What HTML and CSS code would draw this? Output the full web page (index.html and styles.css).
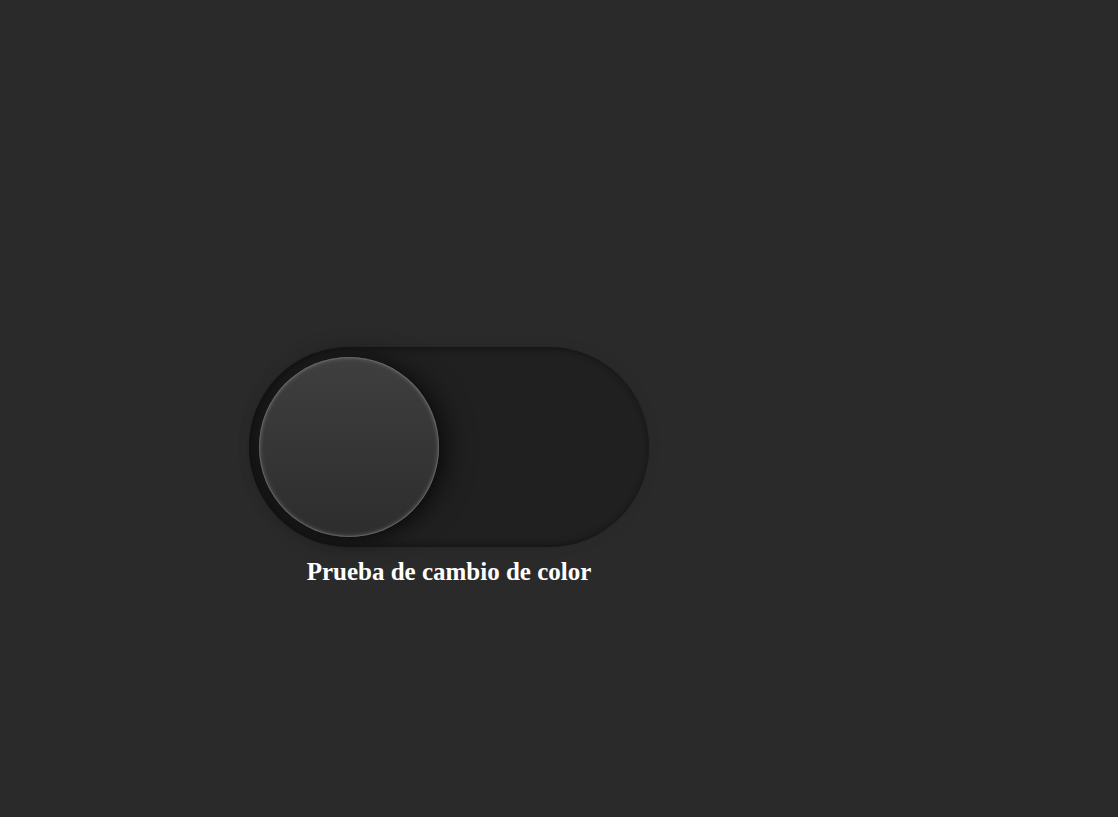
FILE: index.html
```html
<!DOCTYPE html>
<html lang="es">
<head>
<meta charset="utf-8">
<title>Toggle</title>
<link rel="stylesheet" href="styles.css">
</head>
<body>
<div class="wrap">
  <label class="toggle">
    <span class="knob"></span>
  </label>
  <h3 class="label">Prueba de cambio de color</h3>
</div>
</body>
</html>
```
FILE: styles.css
```css
html, body {
  margin: 0;
  height: 100%;
  background: #2a2a2a;
}
.wrap {
  padding-top: 347px;
  padding-left: 249px;
  width: 400px;
}
.toggle {
  display: flex;
  align-items: center;
  box-sizing: border-box;
  width: 400px;
  height: 200px;
  padding: 0 10px;
  border-radius: 100px;
  background: #202020;
  box-shadow: inset 6px 0 10px rgba(0,0,0,0.35), inset 0 0 6px rgba(0,0,0,0.3), 0 0 14px rgba(0,0,0,0.08);
}
.knob {
  width: 180px;
  height: 180px;
  border-radius: 50%;
  background: linear-gradient(to bottom, #3f3f3f 0%, #363636 50%, #2d2d2d 100%);
  box-shadow: inset 0 0 0 1px rgba(120,120,120,0.5), inset 0 0 4px 1px rgba(150,150,150,0.45), 10px 0 26px rgba(0,0,0,0.5), 0 4px 12px rgba(0,0,0,0.35);
}
.label {
  margin: 11px 0 0;
  text-align: center;
  font-family: "Liberation Serif", "Times New Roman", serif;
  font-weight: bold;
  font-size: 25px;
  color: #ffffff;
  line-height: normal;
}
```
